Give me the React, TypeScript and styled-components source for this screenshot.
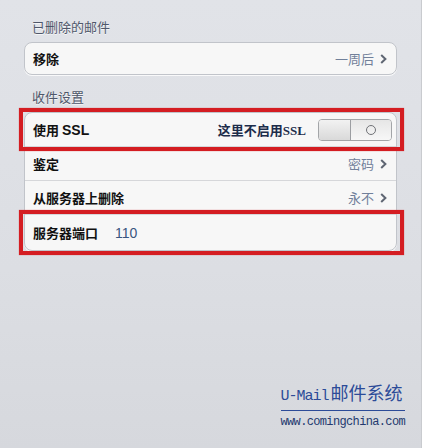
import React from "react";
import styled, { createGlobalStyle } from "styled-components";

const GlobalStyle = createGlobalStyle`
  html, body {
    margin: 0;
    padding: 0;
  }
  body {
    font-family: "Noto Sans CJK SC", "Noto Sans", sans-serif;
  }
`;

const Page = styled.div`
  width: 422px;
  height: 448px;
  box-sizing: border-box;
  padding: 17px 24px 0 24px;
  display: flex;
  flex-direction: column;
  background: linear-gradient(180deg, #e1e3e8 0%, #dcdee3 60%, #d6d8dd 100%);
  border-right: 1px solid #c9cbcf;
  overflow: hidden;
`;

const SectionTitle = styled.div`
  font-size: 13px;
  line-height: 20px;
  color: #4f576a;
  padding-left: 8px;
  margin-bottom: 5px;
  text-shadow: 0 1px 0 rgba(255, 255, 255, 0.7);
`;

const Group = styled.div`
  background: #f7f7f7;
  border: 1px solid #c1c4ca;
  border-radius: 8px;
  margin-bottom: 12px;
  box-shadow: 0 1px 0 rgba(255, 255, 255, 0.8);
`;

const Row = styled.div<{ $height?: number; $marked?: boolean }>`
  position: relative;
  height: ${(p) => p.$height ?? 33}px;
  display: flex;
  align-items: center;
  padding: 0 9px 0 8px;
  border-top: 1px solid #d6d7da;
  &:first-child {
    border-top: none;
  }
  ${(p) =>
    p.$marked &&
    `
    &::after {
      content: "";
      position: absolute;
      left: -6px;
      right: -8px;
      top: -5px;
      bottom: -5px;
      border: 4px solid #d41d22;
      box-shadow: 0 0 1px rgba(212, 29, 34, 0.6);
      pointer-events: none;
    }
  `}
`;

const Label = styled.span`
  font-size: 13px;
  font-weight: 700;
  color: #111;
`;

const Latin = styled.span`
  font-family: "Liberation Sans", "Noto Sans CJK SC", sans-serif;
  font-size: 14px;
  font-weight: 700;
`;

const Value = styled.span`
  margin-left: auto;
  font-size: 13px;
  color: #71809a;
`;

const InlineValue = styled.span`
  margin-left: 17px;
  font-family: "Liberation Sans", sans-serif;
  font-size: 14px;
  color: #3a5580;
`;

const Chevron = styled.svg`
  margin-left: 6px;
  width: 7px;
  height: 10px;
`;

const Note = styled.span`
  margin-left: auto;
  margin-right: 12px;
  font-family: "Liberation Serif", "Noto Sans CJK SC", serif;
  font-size: 13px;
  font-weight: 700;
  color: #1c2c4a;
`;

const Toggle = styled.div`
  width: 72px;
  height: 20px;
  display: flex;
  border: 1px solid #a3a5a8;
  border-radius: 4px;
  overflow: hidden;
  margin-right: -5px;
`;

const ToggleKnob = styled.div`
  width: 31px;
  background: linear-gradient(180deg, #f2f2f2 0%, #d9d9d9 100%);
  border-right: 1px solid #9c9ea2;
`;

const ToggleTrack = styled.div`
  flex: 1;
  display: flex;
  align-items: center;
  justify-content: center;
  background: linear-gradient(180deg, #e6e6e6 0%, #f7f7f7 100%);
`;

const Ring = styled.div`
  width: 8px;
  height: 8px;
  border: 1.5px solid #707277;
  border-radius: 50%;
`;

const Footer = styled.div`
  margin-top: auto;
  margin-right: -8px;
  margin-bottom: 19px;
  align-self: flex-end;
  display: flex;
  flex-direction: column;
  align-items: stretch;
`;

const Brand = styled.div`
  font-family: "Liberation Mono", "Noto Sans CJK SC", monospace;
  font-size: 18px;
  line-height: 22px;
  color: #2c4b98;
  padding-bottom: 2px;
  border-bottom: 1px solid #2c4b98;
  white-space: nowrap;
`;

const BrandLatin = styled.span`
  font-size: 15px;
  letter-spacing: -1px;
  margin-right: 2px;
`;

const Site = styled.div`
  font-family: "Liberation Mono", monospace;
  font-size: 12px;
  line-height: 14px;
  letter-spacing: -0.65px;
  margin-top: 4px;
  color: #24396f;
`;

const Arrow = () => (
  <Chevron viewBox="0 0 7 10">
    <path d="M1.2 1 L5.4 5 L1.2 9" fill="none" stroke="#5f6673" strokeWidth="2" />
  </Chevron>
);

const App = () => {
  return (
    <>
      <GlobalStyle />
      <Page>
        <SectionTitle>已删除的邮件</SectionTitle>
        <Group>
          <Row $height={31}>
            <Label>移除</Label>
            <Value>一周后</Value>
            <Arrow />
          </Row>
        </Group>

        <SectionTitle>收件设置</SectionTitle>
        <Group>
          <Row $marked>
            <Label>
              使用 <Latin>SSL</Latin>
            </Label>
            <Note>这里不启用SSL</Note>
            <Toggle>
              <ToggleKnob />
              <ToggleTrack>
                <Ring />
              </ToggleTrack>
            </Toggle>
          </Row>
          <Row>
            <Label>鉴定</Label>
            <Value>密码</Value>
            <Arrow />
          </Row>
          <Row>
            <Label>从服务器上删除</Label>
            <Value>永不</Value>
            <Arrow />
          </Row>
          <Row $marked $height={35}>
            <Label>服务器端口</Label>
            <InlineValue>110</InlineValue>
          </Row>
        </Group>

        <Footer>
          <Brand>
            <BrandLatin>U-Mail</BrandLatin>邮件系统
          </Brand>
          <Site>www.comingchina.com</Site>
        </Footer>
      </Page>
    </>
  );
};

export default App;
